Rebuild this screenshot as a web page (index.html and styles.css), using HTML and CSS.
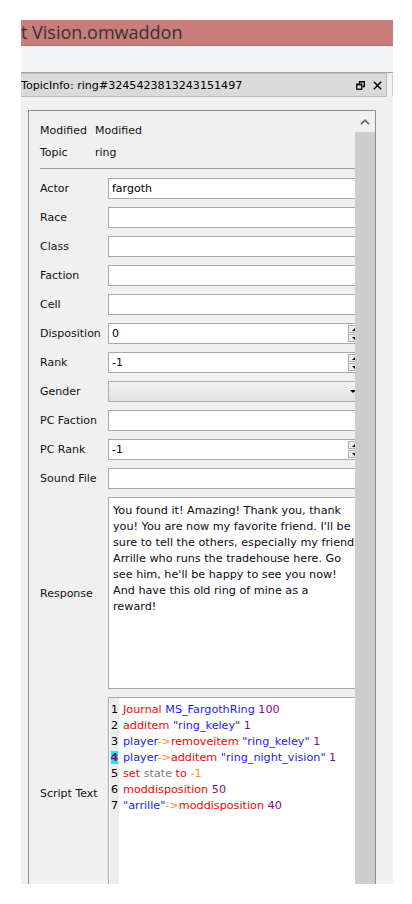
FILE: index.html
```html
<!DOCTYPE html>
<html>
<head>
<meta charset="utf-8">
<link rel="stylesheet" href="styles.css">
</head>
<body>
<div class="window">
  <div class="titlebar">t Vision.omwaddon</div>
  <div class="toolbar"></div>
  <div class="dock-top">
    <div class="dock-head">
      <span class="dock-title">TopicInfo: ring#3245423813243151497</span>
      <span class="dock-btns">
        <svg class="ico" width="9" height="9" viewBox="0 0 9 9"><path d="M3.5 2.5V0.75H8.25V5.5H6.5" fill="none" stroke="#000" stroke-width="1.3"/><rect x="0.75" y="3.25" width="5" height="5" fill="none" stroke="#000" stroke-width="1.3"/><path d="M0.5 3.6H6" stroke="#000" stroke-width="1.6"/></svg>
        <svg class="ico" width="9" height="9" viewBox="0 0 9 9"><path d="M0.8 0.8L8.2 8.2M8.2 0.8L0.8 8.2" stroke="#000" stroke-width="1.4"/></svg>
      </span>
    </div>
    <div class="dock-edge"></div>
  </div>
  <div class="dock-body">
    <div class="frame">
      <div class="content">
        <div class="info"><span class="info-label">Modified</span><span>Modified</span></div>
        <div class="info"><span class="info-label">Topic</span><span>ring</span></div>
        <div class="sep"></div>
        <div class="form">
          <div class="label">Actor</div><div class="field">fargoth</div>
          <div class="label">Race</div><div class="field"></div>
          <div class="label">Class</div><div class="field"></div>
          <div class="label">Faction</div><div class="field"></div>
          <div class="label">Cell</div><div class="field"></div>
          <div class="label">Disposition</div><div class="field spin"><span class="spin-text">0</span><span class="spin-btns"><span class="sbtn"><span class="tri-up"></span></span><span class="sbtn"><span class="tri-down"></span></span></span></div>
          <div class="label">Rank</div><div class="field spin"><span class="spin-text">-1</span><span class="spin-btns"><span class="sbtn"><span class="tri-up"></span></span><span class="sbtn"><span class="tri-down"></span></span></span></div>
          <div class="label">Gender</div><div class="field combo"><span class="tri-down combo-arrow"></span></div>
          <div class="label">PC Faction</div><div class="field"></div>
          <div class="label">PC Rank</div><div class="field spin"><span class="spin-text">-1</span><span class="spin-btns"><span class="sbtn"><span class="tri-up"></span></span><span class="sbtn"><span class="tri-down"></span></span></span></div>
          <div class="label">Sound File</div><div class="field"></div>
          <div class="label">Response</div>
          <div class="textbox response">You found it! Amazing! Thank you, thank
you! You are now my favorite friend. I'll be
sure to tell the others, especially my friend
Arrille who runs the tradehouse here. Go
see him, he'll be happy to see you now!
And have this old ring of mine as a
reward!</div>
          <div class="label">Script Text</div>
          <div class="textbox script">
            <div class="gutter">
              <div>1</div><div>2</div><div>3</div><div><span class="cur">4</span></div><div>5</div><div>6</div><div>7</div>
            </div>
            <div class="code">
              <div><span class="kw">Journal</span> <span class="id">MS_FargothRing</span> <span class="num">100</span></div>
              <div><span class="kw">additem</span> <span class="id">"ring_keley"</span> <span class="num">1</span></div>
              <div><span class="id">player</span><span class="op">-&gt;</span><span class="kw">removeitem</span> <span class="id">"ring_keley"</span> <span class="num">1</span></div>
              <div><span class="id">player</span><span class="op">-&gt;</span><span class="kw">additem</span> <span class="id">"ring_night_vision"</span> <span class="num">1</span></div>
              <div><span class="kw">set</span> <span class="var">state</span> <span class="kw">to</span> <span class="op">-1</span></div>
              <div><span class="kw">moddisposition</span> <span class="num">50</span></div>
              <div><span class="id">"arrille"</span><span class="op">-&gt;</span><span class="kw">moddisposition</span> <span class="num">40</span></div>
            </div>
          </div>
        </div>
      </div>
      <div class="scrollbar">
        <div class="sb-arrow"><svg width="10" height="6" viewBox="0 0 10 6"><path d="M1 5.2L5 1.2L9 5.2" fill="none" stroke="#606060" stroke-width="1.6"/></svg></div>
        <div class="sb-thumb"></div>
      </div>
    </div>
  </div>
</div>
</body>
</html>
```

FILE: styles.css
```css
html, body {
  margin: 0;
  padding: 0;
  background: #ffffff;
}

body {
  font-family: "DejaVu Sans", sans-serif;
  font-size: 11px;
  color: #000;
}

.window {
  margin: 20px 0 0 21px;
  width: 372px;
  height: 864px;
  overflow: hidden;
  background: #f0f0f0;
  display: flex;
  flex-direction: column;
}

.titlebar {
  height: 25px;
  flex: none;
  background: #c97d7a;
  border-bottom: 1px solid #b56e6b;
  font-family: "Open Sans", sans-serif;
  font-size: 18px;
  line-height: 25px;
  color: #333;
  white-space: nowrap;
  overflow: hidden;
}

.toolbar {
  height: 26px;
  flex: none;
  background: #f3f4f6;
  border-bottom: 1px solid #a3a3a3;
}

.dock-top {
  height: 24px;
  flex: none;
  display: flex;
  align-items: stretch;
  background: #f0f0f0;
}

.dock-head {
  width: 366px;
  box-sizing: border-box;
  border: 1px solid #bdbdbd;
  border-left: none;
  background: #dadada;
  display: flex;
  align-items: center;
  white-space: nowrap;
}

.dock-title {
  font-size: 11.1px;
  color: #000;
  flex: 1;
  padding-top: 1px;
}

.dock-btns {
  display: flex;
  align-items: center;
  gap: 8px;
  padding-right: 4px;
}

.ico {
  display: block;
}

.dock-edge {
  width: 1px;
  margin: 1px 0 1px 5px;
  background: #cfcfcf;
}

.dock-body {
  flex: 1;
  padding: 13px 0 0 7px;
  overflow: hidden;
}

.frame {
  width: 348px;
  height: 800px;
  box-sizing: border-box;
  border: 1px solid #8d8d8d;
  border-bottom: none;
  display: flex;
}

.content {
  width: 326px;
  overflow: hidden;
  padding: 9px 0 0 11px;
  box-sizing: border-box;
}

.info {
  height: 22px;
  line-height: 22px;
  display: flex;
  white-space: nowrap;
  color: #111;
}

.info-label {
  width: 55px;
}

.sep {
  margin: 4px 0 9px 0;
  height: 1px;
  width: 330px;
  background: #a0a0a0;
}

.form {
  width: 324px;
  display: grid;
  grid-template-columns: 68px 256px;
  grid-auto-rows: auto;
  row-gap: 8px;
  align-items: center;
}

.label {
  white-space: nowrap;
  color: #111;
}

.field {
  height: 21px;
  box-sizing: border-box;
  border: 1px solid #a8a8a8;
  background: #fff;
  line-height: 19px;
  padding-left: 3px;
  white-space: nowrap;
  display: flex;
}

.spin {
  padding-right: 1px;
}

.spin-text {
  flex: 1;
}

.spin-btns {
  width: 14px;
  display: flex;
  flex-direction: column;
  gap: 1px;
  padding: 1px 0;
}

.sbtn {
  flex: 1;
  box-sizing: border-box;
  border: 1px solid #acacac;
  background: #ececec;
  display: flex;
  align-items: center;
  justify-content: center;
}

.tri-up {
  width: 0;
  height: 0;
  border-left: 3px solid transparent;
  border-right: 3px solid transparent;
  border-bottom: 3px solid #000;
}

.tri-down {
  width: 0;
  height: 0;
  border-left: 3px solid transparent;
  border-right: 3px solid transparent;
  border-top: 3px solid #000;
}

.combo {
  background: linear-gradient(#f3f3f3, #e2e2e2);
  border-color: #adadad;
  justify-content: flex-end;
  align-items: center;
  padding-right: 7px;
}

.textbox {
  height: 192px;
  box-sizing: border-box;
  border: 1px solid #a8a8a8;
  background: #fff;
  overflow: hidden;
}

.response {
  white-space: pre;
  font-size: 11.2px;
  line-height: 16px;
  padding: 5px 0 0 4px;
  color: #0a0a1a;
}

.script {
  height: 193px;
  display: flex;
  font-size: 11.2px;
  line-height: 16px;
  white-space: nowrap;
}

.gutter {
  width: 9px;
  margin-left: 1px;
  background: #ececec;
  padding-top: 4px;
  text-align: center;
  color: #000;
}

.cur {
  background: #1fe6ea;
  color: #7b0a84;
  font-weight: bold;
}

.code {
  padding: 4px 0 0 4px;
}

.kw { color: #ff0000; }
.id { color: #1a1aff; }
.num { color: #8b0a8b; }
.op { color: #ff8c1a; }
.var { color: #808080; }

.scrollbar {
  width: 20px;
  display: flex;
  flex-direction: column;
}

.sb-arrow {
  height: 21px;
  display: flex;
  justify-content: center;
  align-items: center;
}

.sb-thumb {
  flex: 1;
  background: #cdcdcd;
}
```
